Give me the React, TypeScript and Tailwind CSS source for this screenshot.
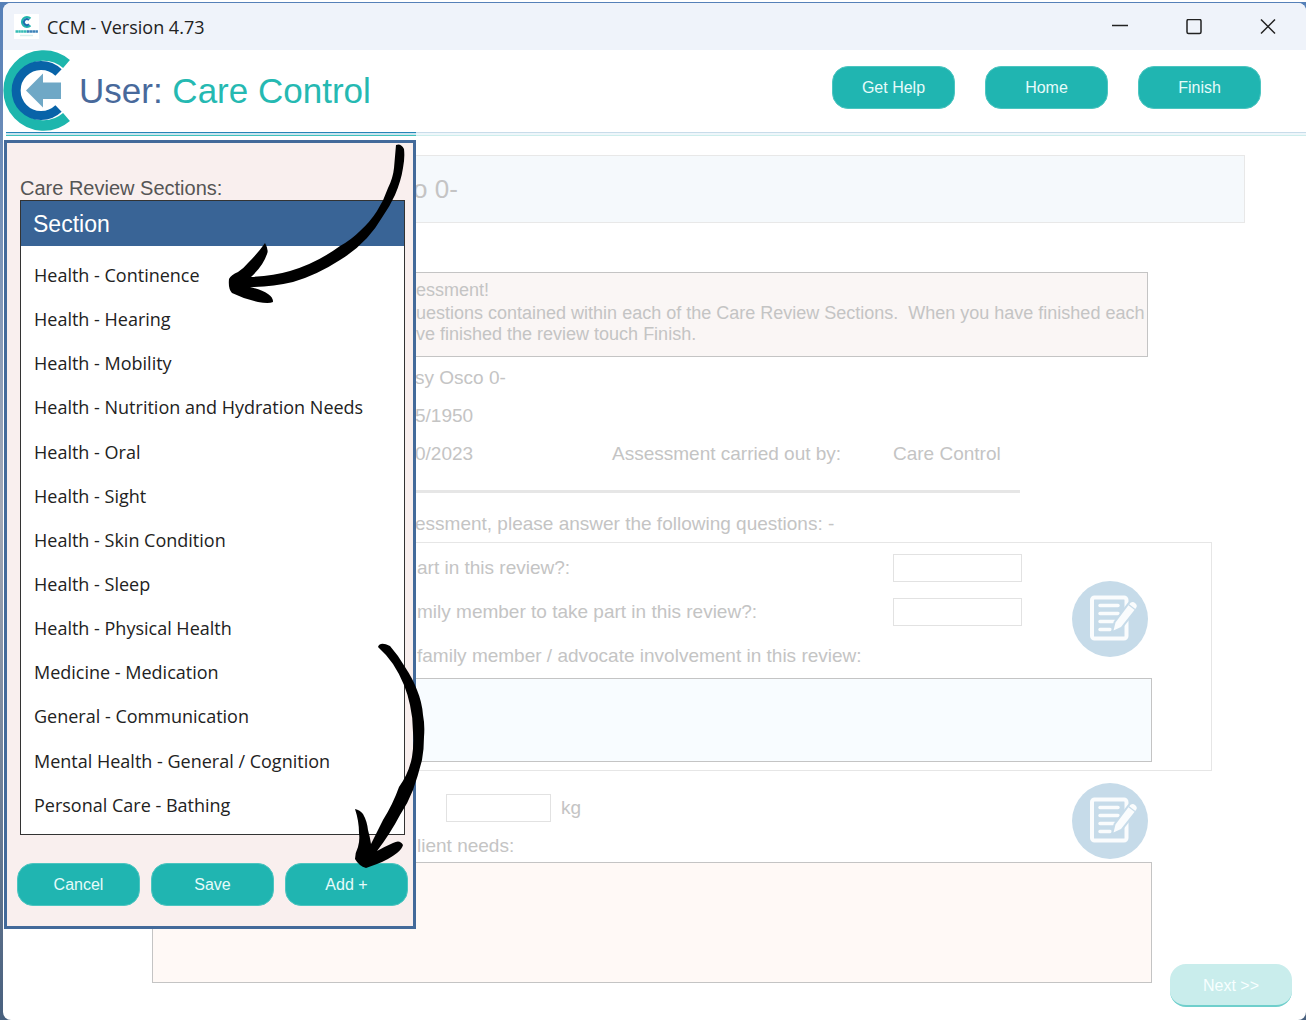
import React, { useState } from "react";

const sections = [
  "Health - Continence",
  "Health - Hearing",
  "Health - Mobility",
  "Health - Nutrition and Hydration Needs",
  "Health - Oral",
  "Health - Sight",
  "Health - Skin Condition",
  "Health - Sleep",
  "Health - Physical Health",
  "Medicine - Medication",
  "General - Communication",
  "Mental Health - General / Cognition",
  "Personal Care - Bathing",
];

const PillButton = ({ children }: { children: React.ReactNode }) => (
  <button
    type="button"
    className="h-[43px] w-[123px] rounded-2xl border border-[#4cc5c0] bg-[#20b5b1] pt-px text-base text-[#e6fbfa]"
  >
    {children}
  </button>
);

const AppIcon = () => (
  <svg width="25" height="25" viewBox="0 0 25 25" aria-hidden="true">
    <rect width="25" height="25" fill="#fff" />
    <path d="M16.5 4.5A5 5 0 1 0 16.5 11.5" fill="none" stroke="#1fb5ac" strokeWidth="2" />
    <path d="M15 6A3 3 0 1 0 15 10.3" fill="none" stroke="#1c6fae" strokeWidth="2" />
    <path d="M1.500 17.500h12" stroke="#35bdb6" strokeWidth="2.500" strokeDasharray="2.500 .3" />
    <path d="M13 17.500h11" stroke="#3c82b9" strokeWidth="2.500" strokeDasharray="2.500 .3" />
    <path d="M6 21.500h13" stroke="#d8f0ef" strokeWidth="1.500" />
  </svg>
);

const BackLogo = () => (
  <svg width="70" height="82" viewBox="0 0 70 82" aria-hidden="true">
    <path d="M63.500 14A35 35 0 1 0 63.500 67" fill="none" stroke="#1db6ad" strokeWidth="10.500" />
    <path d="M55.500 22.500A25 25 0 1 0 55.500 58.500" fill="none" stroke="#0863a8" strokeWidth="9" />
    <path d="M23 40.500L40 23.500V32.500H58V49H40V57.500Z" fill="#6fa8c6" />
  </svg>
);

const NoteIcon = () => (
  <svg width="76" height="76" viewBox="0 0 76 76" aria-hidden="true">
    <circle cx="38" cy="38" r="38" fill="#c6dbe9" />
    <rect x="20" y="16.500" width="34.500" height="41" rx="2.500" fill="none" stroke="#fafcfd" strokeWidth="4" />
    <path d="M28 24.500h18M28 32.500h18M28 40.500h16M28 48.500h10" stroke="#fafcfd" strokeWidth="3.500" strokeLinecap="round" />
    <path
      d="M41.500 49.500L43.500 41.500L57 23.500Q60 19.500 63 22T64 27L49 46Z"
      fill="#fafcfd"
      stroke="#c6dbe9"
      strokeWidth="4"
      paintOrder="stroke"
      strokeLinejoin="round"
    />
    <path d="M56.500 23.500L63 28.500" stroke="#c6dbe9" strokeWidth="1.200" />
  </svg>
);

const Arrows = () => (
  <svg
    width="440"
    height="800"
    viewBox="0 136 440 800"
    className="pointer-events-none absolute top-0 -left-[3px]"
    aria-hidden="true"
  >
    <path d="M396 145Q401 143 404 149Q405 158 403 168Q401 181 395 195Q390 206 383 216Q376 228 367 238Q355 251 340 260Q317 275 293 282Q272 287 250 287Q262 290 268 294Q273 297 273 302Q269 304 258 302Q244 299 232 293Q228 289 229 279Q231 275 238 272Q243 269 248 263Q258 253 265 243Q269 250 267 254Q263 266 251 277Q273 276 290 271Q317 263 340 246Q351 240 360 231Q370 222 377 211Q384 200 388 188Q393 178 394 168Z" />
    <path d="M378 647Q380 641 390 646Q398 655 405 667Q413 679 417 690Q422 702 423 715Q425 725 424 737Q424 749 422 760Q418 776 413 790Q408 803 400 815Q390 834 377 851Q386 846 393 843Q400 839 403 845Q402 849 397 853Q388 860 377 864L366 868Q359 866 355 859Q355 853 358 847Q360 840 359 833Q359 821 355 809Q360 810 363 814Q367 821 368 830Q370 837 371 844L383 820Q393 804 399 787Q409 773 412 757Q414 745 413 732Q413 718 410 705Q408 695 404 685Q399 673 393 664Q386 654 378 647Z" />
  </svg>
);

const TitleBar = () => (
  <div className="flex h-[47px] items-center justify-between rounded-t-lg bg-[#eff3fa] pr-[30px] pl-[11px] font-['Open_Sans',sans-serif]">
    <div className="flex items-center gap-2">
      <AppIcon />
      <span className="text-lg text-[#222]">CCM - Version 4.73</span>
    </div>
    <div className="flex items-center gap-[58px]">
      <button type="button" aria-label="Minimize">
        <svg width="16" height="16" viewBox="0 0 16 16">
          <path d="M0 6.500h16" stroke="#222" strokeWidth="1.500" />
        </svg>
      </button>
      <button type="button" aria-label="Maximize">
        <svg width="16" height="16" viewBox="0 0 16 16">
          <rect x="1" y="0.500" width="14" height="14" rx="1.500" fill="none" stroke="#222" strokeWidth="1.500" />
        </svg>
      </button>
      <button type="button" aria-label="Close">
        <svg width="16" height="16" viewBox="0 0 16 16">
          <path d="M1 0.500l14 14M15 0.500L1 14.500" stroke="#222" strokeWidth="1.500" />
        </svg>
      </button>
    </div>
  </div>
);

const Header = () => (
  <header className="flex h-[82px] justify-between pr-[45px]">
    <div className="flex items-center gap-[6px]">
      <button type="button" aria-label="Back">
        <BackLogo />
      </button>
      <h1 className="text-[35px] text-[#48699b]">
        User: <span className="text-[#25b9b2]">Care Control</span>
      </h1>
    </div>
    <div className="flex gap-[30px] pt-[16px]">
      <PillButton>Get Help</PillButton>
      <PillButton>Home</PillButton>
      <PillButton>Finish</PillButton>
    </div>
  </header>
);

const SectionsPanel = () => (
  <aside className="absolute top-[4px] left-px w-[412px] border-[3px] border-[#436a9a] bg-[#f9efee] pt-[34px] pb-[20px]">
    <h2 className="pl-[13px] text-xl leading-[23px] text-[#555]">Care Review Sections:</h2>
    <div className="mr-[8px] ml-[13px] border border-[#333] bg-white pb-[14px]">
      <table className="h-[619px] w-full text-left">
        <thead>
          <tr className="h-[45px] bg-[#396496] text-white">
            <th scope="col" className="pl-3 text-[23px] leading-6 font-normal">
              Section
            </th>
          </tr>
        </thead>
        <tbody className="font-['Open_Sans',sans-serif] text-lg leading-6 text-[#222]">
          {sections.map((name) => (
            <tr key={name}>
              <td className="pt-[14px] pl-[13px]">{name}</td>
            </tr>
          ))}
        </tbody>
      </table>
    </div>
    <div className="flex gap-[11px] pt-[28px] pl-[10px]">
      <PillButton>Cancel</PillButton>
      <PillButton>Save</PillButton>
      <PillButton>Add +</PillButton>
    </div>
  </aside>
);

const ReviewForm = () => {
  const [involvement, setInvolvement] = useState("");
  const [needs, setNeeds] = useState("");
  const [weight, setWeight] = useState("");

  return (
    <form className="pt-[19px] pl-[149px] text-[19px] text-[#c4c4c4]">
      <div className="mr-[61px] flex h-[68px] items-center border border-[#e8e8e8] bg-[#f5f9fc] pl-[260px] text-[26px]">
        o 0-
      </div>

      <div className="mt-[49px] mr-[158px] h-[85px] border border-[#c4c4c4] bg-[#faf6f5] pt-[7px] pl-[263px] text-lg leading-[21px] whitespace-pre">
        <p className="pb-[2px]">essment!</p>
        <p>uestions contained within each of the Care Review Sections.  When you have finished each</p>
        <p>ve finished the review touch Finish.</p>
      </div>

      <div className="mt-[2px] pl-[263px] leading-[38px]">
        <p>sy Osco 0-</p>
        <p>5/1950</p>
        <div className="grid grid-cols-[197px_281px_1fr]">
          <span>0/2023</span>
          <span>Assessment carried out by:</span>
          <span>Care Control</span>
        </div>
      </div>

      <hr className="mt-[17px] mr-[286px] border-t-[3px] border-[#e6e6e6]" />
      <p className="h-[49px] pt-[19px] pl-[263px] leading-6">essment, please answer the following questions: -</p>

      <div className="mr-[94px] border border-[#e6e6e6] pt-[3px] pb-[8px]">
        <div className="flex pl-[264px]">
          <div className="leading-[44px]">
            <div className="flex items-center">
              <label htmlFor="client-part" className="w-[476px]">
                art in this review?:
              </label>
              <input id="client-part" className="h-[28px] w-[129px] border border-[#e2e2e2]" />
            </div>
            <div className="flex items-center">
              <label htmlFor="family-part" className="w-[476px]">
                mily member to take part in this review?:
              </label>
              <input id="family-part" className="h-[28px] w-[129px] border border-[#e2e2e2]" />
            </div>
            <label htmlFor="involvement" className="block">
              family member / advocate involvement in this review:
            </label>
          </div>
          <button type="button" aria-label="Edit involvement" className="mt-[35px] ml-[50px] self-start">
            <NoteIcon />
          </button>
        </div>
        <textarea
          id="involvement"
          value={involvement}
          onChange={(e) => setInvolvement(e.target.value)}
          className="block h-[84px] w-[calc(100%-59px)] resize-none border border-[#c4c4c4] bg-[#f8fcff]"
        />
      </div>

      <div className="flex h-[91px] justify-between pr-[158px] pl-[265px]">
        <div className="pt-[18px]">
          <div className="flex h-[38px] items-center gap-[10px] pl-[29px]">
            <input
              aria-label="Weight"
              value={weight}
              onChange={(e) => setWeight(e.target.value)}
              className="h-[28px] w-[105px] border border-[#e2e2e2]"
            />
            <span>kg</span>
          </div>
          <label htmlFor="needs" className="block leading-[38px]">
            lient needs:
          </label>
        </div>
        <button type="button" aria-label="Edit client needs" className="mt-[12px] self-start">
          <NoteIcon />
        </button>
      </div>

      <div className="flex h-[145px] gap-[18px] pr-[14px]">
        <textarea
          id="needs"
          value={needs}
          onChange={(e) => setNeeds(e.target.value)}
          className="h-[121px] flex-1 resize-none border border-[#c4c4c4] bg-[#fff9f6]"
        />
        <button
          type="button"
          className="h-[43px] w-[122px] self-end rounded-2xl border-b-2 border-[#6fcfcc] bg-[#c9edec] pt-[2px] text-base text-[#f7ffff]"
        >
          Next &gt;&gt;
        </button>
      </div>
    </form>
  );
};

const App = () => {
  return (
    <div className="flex min-h-screen flex-col bg-white pt-[2px] pr-[3px] pb-[5px] font-['Liberation_Sans',Arial,sans-serif]">
      <div className="flex flex-1 flex-col bg-linear-to-b from-[#5580b8] via-[#a5a9b5] to-[#48607e] pt-px pl-[3px]">
        <div className="flex-1 rounded-lg bg-white">
          <TitleBar />
          <Header />
          <div className="flex h-[4px]">
            <div className="ml-[3px] w-[410px] border-t border-b border-t-[#2585b8] border-b-[#3fc3bc] bg-[#c9e4ee]" />
            <div className="flex-1 border-t border-b border-t-[#c8dcea] border-b-[#cdeeec] bg-[#eef6fa]" />
          </div>
          <main className="relative">
            <ReviewForm />
            <SectionsPanel />
            <Arrows />
          </main>
        </div>
      </div>
    </div>
  );
};

export default App;
